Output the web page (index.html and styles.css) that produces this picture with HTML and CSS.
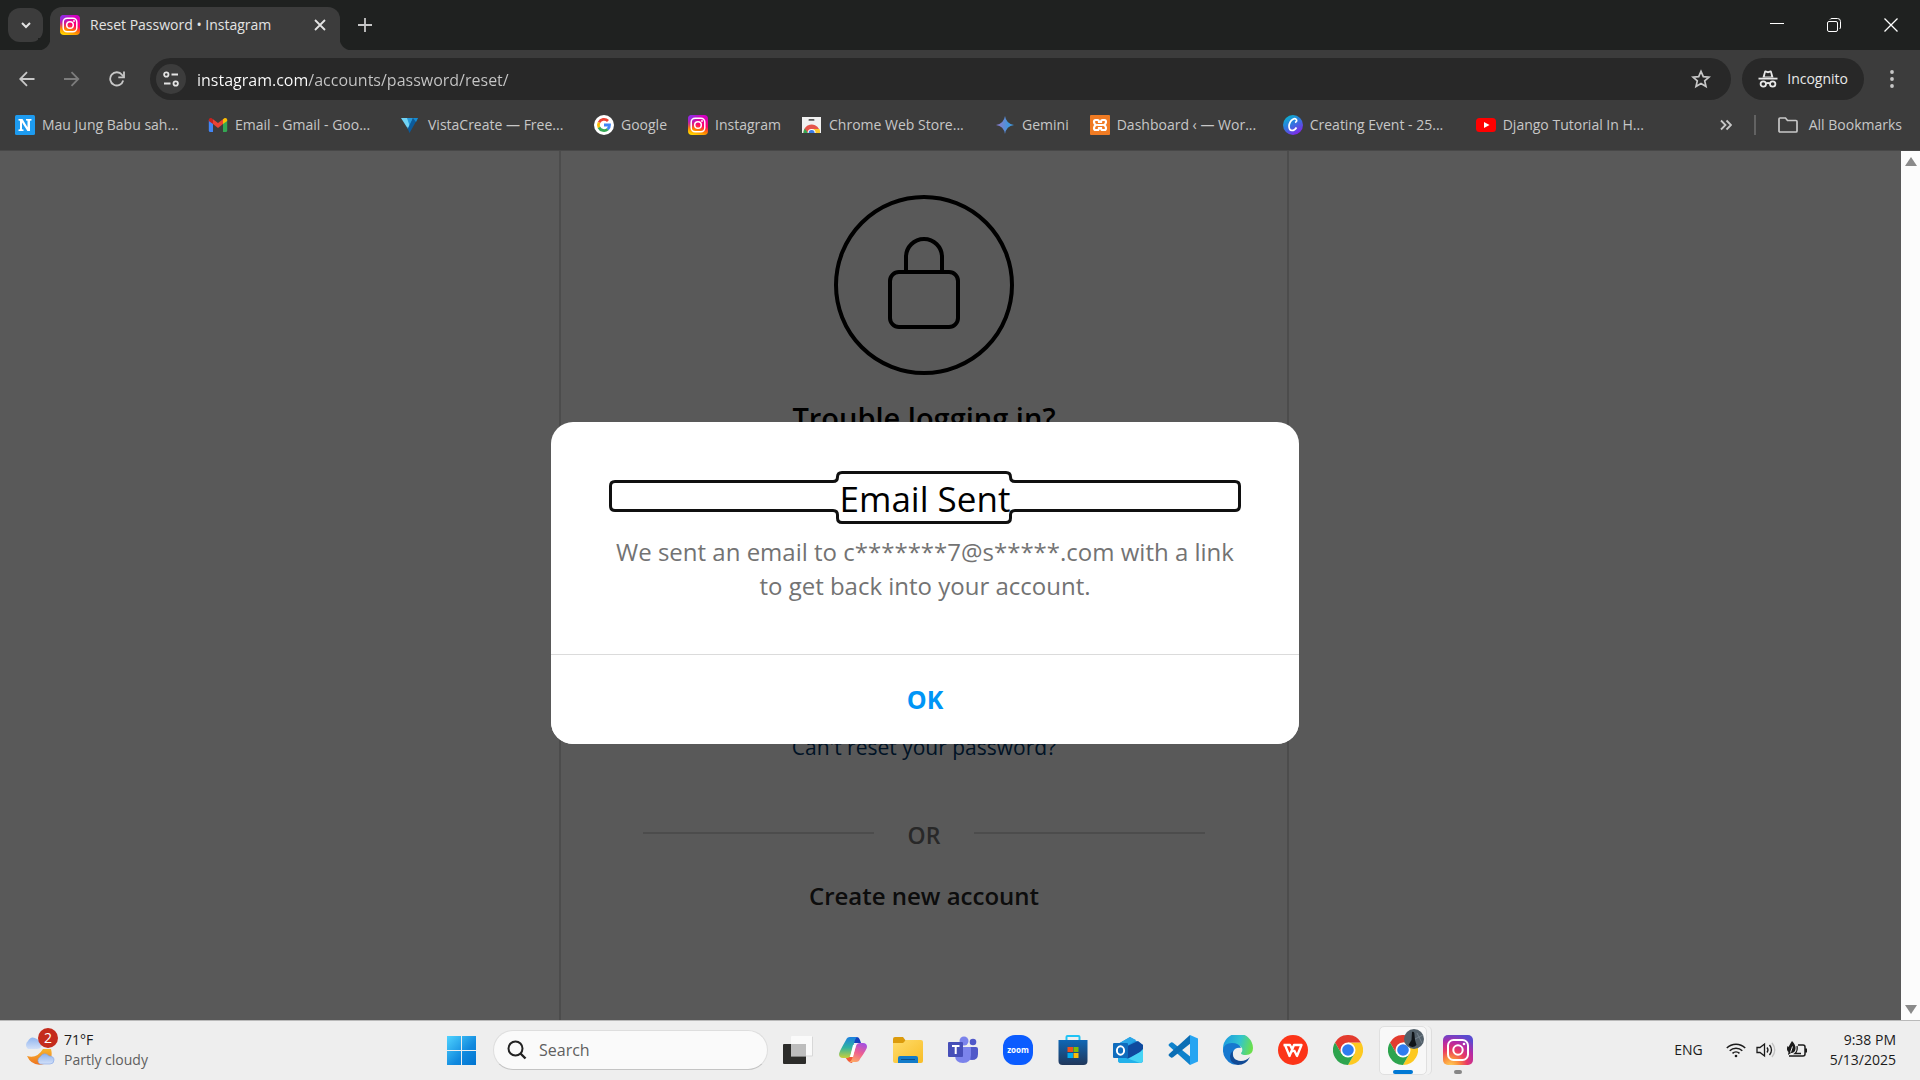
FILE: index.html
```html
<!DOCTYPE html>
<html lang="en">
<head>
<meta charset="utf-8">
<title>Reset Password • Instagram</title>
<link rel="stylesheet" href="styles.css">
</head>
<body>
<svg class="defs" width="0" height="0" aria-hidden="true">
  <defs>
    <linearGradient id="ig-base" x1="0.3" y1="1" x2="0.6" y2="0">
      <stop offset="0" stop-color="#ffd600"/><stop offset=".28" stop-color="#ff7a00"/><stop offset=".55" stop-color="#ff0169"/><stop offset="1" stop-color="#d300c5"/>
    </linearGradient>
    <radialGradient id="ig-corner" cx="0" cy="0" r=".7">
      <stop offset="0" stop-color="#7638fa"/><stop offset="1" stop-color="#7638fa" stop-opacity="0"/>
    </radialGradient>
    <symbol id="instagram" viewBox="0 0 20 20">
      <rect width="20" height="20" rx="4" fill="url(#ig-base)"/>
      <rect width="20" height="20" rx="4" fill="url(#ig-corner)"/>
      <rect x="3.2" y="3.2" width="13.6" height="13.6" rx="4" fill="none" stroke="#fff" stroke-width="1.5"/>
      <circle cx="10" cy="10" r="3.3" fill="none" stroke="#fff" stroke-width="1.5"/>
      <circle cx="14" cy="6" r=".9" fill="#fff"/>
    </symbol>
    <symbol id="chrome" viewBox="0 0 30 30">
      <path d="M28 7.5A15 15 0 0 1 15 30l6.4-11.2L15 7.5Z" fill="#fdc921"/>
      <path d="M2 7.5 8.5 18.8 15 15V7.5H28A15 15 0 0 0 2 7.5Z" fill="#e33b2e"/>
      <path d="M2 7.5A15 15 0 0 0 15 30L21.4 18.8 15 15 8.5 18.8Z" fill="#2da44e"/>
      <circle cx="15" cy="15" r="7.5" fill="#fff"/>
      <circle cx="15" cy="15" r="5.8" fill="#2f7cf0"/>
    </symbol>
  </defs>
</svg>

<header class="browser">
  <div class="tabstrip">
    <button class="tab-search" aria-label="Search tabs"><svg width="12" height="12" viewBox="0 0 12 12"><path d="M2 4l4 4 4-4" fill="none" stroke="#e3e3e3" stroke-width="2"/></svg></button>
    <div class="tab">
      <svg width="20" height="20"><use href="#instagram"/></svg>
      <span class="tab-title">Reset Password • Instagram</span>
      <button class="bare" aria-label="Close tab"><svg width="12" height="12" viewBox="0 0 12 12"><path d="M1 1l10 10M11 1L1 11" stroke="#e3e3e3" stroke-width="1.8"/></svg></button>
    </div>
    <button class="bare new-tab" aria-label="New tab"><svg width="14" height="14" viewBox="0 0 14 14"><path d="M7 0v14M0 7h14" stroke="#c7c7c7" stroke-width="1.800"/></svg></button>
    <div class="window-buttons">
      <button class="bare" aria-label="Minimize"><svg width="14" height="14" viewBox="0 0 14 14"><path d="M0 5.500h14" stroke="#fff"/></svg></button>
      <button class="bare" aria-label="Restore"><svg width="14" height="14" viewBox="0 0 14 14" fill="none" stroke="#fff"><rect x=".5" y="3.500" width="10" height="10" rx="1.500"/><path d="M3 1.500Q3.500.5 5 .5h5.500q3 0 3 3V9q0 1.500-1 2"/></svg></button>
      <button class="bare" aria-label="Close"><svg width="14" height="14" viewBox="0 0 14 14"><path d="M.5.5l13 13M13.500.5l-13 13" stroke="#fff" stroke-width="1.300"/></svg></button>
    </div>
  </div>

  <div class="toolbar">
    <nav class="history">
      <button class="bare" aria-label="Back"><svg width="16" height="16" viewBox="0 0 16 16"><path d="M15.500 8H2M8 1.200L1.200 8 8 14.800" fill="none" stroke="#c7c7c7" stroke-width="1.800"/></svg></button>
      <button class="bare" aria-label="Forward"><svg width="16" height="16" viewBox="0 0 16 16"><path d="M0 8h14M7.500 1.200L14.300 8l-6.800 6.800" fill="none" stroke="#7c7c7c" stroke-width="1.800"/></svg></button>
      <button class="bare" aria-label="Reload"><svg width="16" height="16" viewBox="0 0 16 16"><path d="M14.200 9.500A6.600 6.600 0 1 1 13 3.800L14.500 5.500" fill="none" stroke="#c7c7c7" stroke-width="1.800"/><path d="M15 .5v5.800H9.300" fill="none" stroke="#c7c7c7" stroke-width="1.800"/></svg></button>
    </nav>
    <div class="omnibox">
      <button class="site-info" aria-label="View site information"><svg width="16" height="16" viewBox="0 0 16 16" fill="none" stroke="#e3e3e3" stroke-width="1.800"><circle cx="3.300" cy="3.500" r="2.200"/><path d="M8.500 3.500H15M1 12.500h6.500"/><circle cx="12.700" cy="12.500" r="2.200"/></svg></button>
      <input class="url" type="text" aria-label="Address" value="instagram.com/accounts/password/reset/">
      <button class="bare" aria-label="Bookmark this tab"><svg width="20" height="20" viewBox="0 0 20 20"><path d="M10 2.300l2.300 5.300 5.700.5-4.300 3.800 1.300 5.700L10 14.600l-5 3 1.300-5.700L2 8.100l5.700-.5z" fill="none" stroke="#c7c7c7" stroke-width="1.700"/></svg></button>
    </div>
    <button class="incognito">
      <svg width="20" height="18" viewBox="0 0 20 18"><path d="M4.500 7.500L6.300 1.300Q6.500.5 7.500.6L10 1.200 12.500.6q1-.1 1.200.7l1.800 6.200z" fill="#e8e8e8"/><path d="M7.700 2.600L6.800 6.500h6.400l-.9-3.900L10 3.200z" fill="#282828"/><path d="M.5 8.600h19" stroke="#e8e8e8" stroke-width="1.800"/><g fill="none" stroke="#e8e8e8" stroke-width="1.800"><circle cx="5.300" cy="14" r="2.700"/><circle cx="14.700" cy="14" r="2.700"/><path d="M8 13.500q2-1 4 0"/></g></svg>
      Incognito
    </button>
    <button class="bare menu" aria-label="Menu"><svg width="4" height="18" viewBox="0 0 4 18" fill="#c7c7c7"><circle cx="2" cy="2" r="1.900"/><circle cx="2" cy="9" r="1.900"/><circle cx="2" cy="16" r="1.900"/></svg></button>
  </div>

  <nav class="bookmarks">
    <a class="bookmark clipped" href="#"><svg width="20" height="20" viewBox="0 0 20 20"><rect width="20" height="20" rx="1.500" fill="#1d9bf0"/><path d="M3.500 4h4l5 8.200V5.800L11 5.500V4h5.500v1.500L15 5.800V16h-2.600L7 7.500v6.700l1.500.3V16h-5v-1.500L5 14.200V5.800l-1.500-.3z" fill="#fff"/></svg><span>Mau Jung Babu sah...</span></a>
    <a class="bookmark clipped" href="#"><svg width="20" height="20" viewBox="0 0 20 20"><path d="M.8 5v10.500q0 1.500 1.500 1.500H5V8z" fill="#4285f4"/><path d="M15 8v9h2.700q1.500 0 1.500-1.500V5z" fill="#34a853"/><path d="M5 9V4.200l5 3.900 5-3.900V9l-5 4z" fill="#ea4335"/><path d="M.8 5.500V4.800Q1 2.500 3.300 3L5 4.200V9L.8 6z" fill="#c5221f"/><path d="M19.200 5.500V4.800Q19 2.500 16.700 3L15 4.200V9l4.200-3z" fill="#fbbc04"/></svg><span>Email - Gmail - Goo...</span></a>
    <a class="bookmark clipped" href="#"><svg width="20" height="20" viewBox="0 0 20 20"><path d="M0 3h7l3 8-3 3z" fill="#70d3f5"/><path d="M6 3h6l-3 9z" fill="#2798d8"/><path d="M7 13l5-10h5L8.500 18 6 12z" fill="#0c5b9b"/><path d="M12 3h5l-2 4z" fill="#168bd1"/></svg><span>VistaCreate — Free...</span></a>
    <a class="bookmark" href="#"><svg width="20" height="20" viewBox="0 0 20 20" fill="none" stroke-width="2.800"><circle cx="10" cy="10" r="10" fill="#fff"/><path d="M14 6A5.600 5.600 0 0 0 5 7.500" stroke="#ea4335"/><path d="M5 7.500a5.600 5.600 0 0 0 0 5" stroke="#fbbc05"/><path d="M5 12.500a5.600 5.600 0 0 0 8.700 1.700" stroke="#34a853"/><path d="M10 10h5.500a5.600 5.600 0 0 1-1.800 4.200" stroke="#4285f4"/></svg><span>Google</span></a>
    <a class="bookmark" href="#"><svg width="20" height="20"><use href="#instagram"/></svg><span>Instagram</span></a>
    <a class="bookmark clipped" href="#"><svg width="20" height="20" viewBox="0 0 20 20"><path d="M0 2h19v16H0z" fill="#f1f1f1"/><rect x="6.500" y="4" width="6" height="1.800" rx=".9" fill="#555"/><path d="M1.500 18a8.200 8.200 0 0 1 15.500-4H9.500v4z" fill="#e5544a"/><path d="M1.500 18q0-2.500 1.300-4.500L6 18z" fill="#34a853"/><path d="M10 14h7.500q.8 2 .5 4h-8z" fill="#fbc72d"/><path d="M5.600 18a4 4 0 0 1 8 0z" fill="#fff"/><path d="M6.600 18a3 3 0 0 1 6 0z" fill="#3879e8"/></svg><span>Chrome Web Store...</span></a>
    <a class="bookmark" href="#"><svg width="20" height="20" viewBox="0 0 20 20"><defs><linearGradient id="gem"><stop offset=".2" stop-color="#7d7fd0"/><stop offset=".7" stop-color="#4296dd"/></linearGradient></defs><path d="M10 1q1.200 7.800 9 9-7.800 1.200-9 9-1.200-7.800-9-9 7.800-1.200 9-9z" fill="url(#gem)"/></svg><span>Gemini</span></a>
    <a class="bookmark clipped" href="#"><svg width="20" height="20" viewBox="0 0 20 20"><rect width="20" height="20" rx="1" fill="#f07b23"/><path d="M7.500 5H5.500Q4 5 4 7t2 3q-2 1-2 3t1.500 2h2Q9 15 9 13h2q0 2 1.500 2h2q1.500 0 1.500-2t-2-3q2-1 2-3t-1.500-2h-2Q11 5 11 7H9Q9 5 7.500 5zM7.500 10h5" fill="none" stroke="#fff" stroke-width="2.200"/></svg><span>Dashboard ‹ — Wor...</span></a>
    <a class="bookmark clipped" href="#"><svg width="20" height="20" viewBox="0 0 20 20"><defs><linearGradient id="canva" x1="0" y1="0" x2=".6" y2="1"><stop stop-color="#00c4cc"/><stop offset=".5" stop-color="#2b7ddd"/><stop offset="1" stop-color="#7d2ae8"/></linearGradient></defs><circle cx="10" cy="10" r="10" fill="url(#canva)"/><path d="M12 7.500q2.200-.8 1.500-2.700Q12.500 3 10 4.200 6.500 6.300 6 11q0 4.300 3 4.500 2.700 0 4.500-3" fill="none" stroke="#fff" stroke-width="1.700"/></svg><span>Creating Event - 25...</span></a>
    <a class="bookmark clipped" href="#"><svg width="20" height="20" viewBox="0 0 20 20"><rect y="3" width="20" height="14" rx="3.500" fill="#f00"/><path d="M8 7l5.500 3L8 13z" fill="#fff"/></svg><span>Django Tutorial In H...</span></a>
    <div class="bookmarks-end">
      <button class="bare" aria-label="More bookmarks"><svg width="12" height="12" viewBox="0 0 12 12"><path d="M1 1.500L5.500 6 1 10.500M6.500 1.500L11 6l-4.500 4.500" fill="none" stroke="#c7c7c7" stroke-width="1.800"/></svg></button>
      <span class="rule"></span>
      <a class="bookmark all" href="#"><svg width="20" height="20" viewBox="0 0 20 20"><path d="M1 4q0-1 1-1h5.500l2 2.500H18q1 0 1 1V16q0 1-1 1H2q-1 0-1-1z" fill="none" stroke="#c7c7c7" stroke-width="1.700"/></svg><span>All Bookmarks</span></a>
    </div>
  </nav>
</header>

<main class="viewport">
  <div class="page">
    <section class="card">
      <svg class="lock" width="180" height="180" viewBox="0 0 180 180" fill="none" stroke="#000" stroke-width="4"><circle cx="90" cy="90" r="88"/><rect x="56" y="77" width="68" height="55" rx="9"/><path d="M72 77V62a18 18 0 0 1 36 0v15"/></svg>
      <h1 class="heading">Trouble logging in?</h1>
      <a class="help" href="#">Can't reset your password?</a>
      <div class="or"><span>OR</span></div>
      <a class="create" href="#">Create new account</a>
    </section>
    <div class="overlay">
      <div class="dialog" role="dialog" aria-labelledby="sent">
        <div class="message">
          <div class="title">
            <svg width="632" height="54" viewBox="0 0 632 54"><path d="M6 10.500H224Q228.500 10.500 228.500 6T233 1.500H397Q401.500 1.500 401.500 6T406 10.500H626Q630.500 10.500 630.500 15V35Q630.500 39.500 626 39.500H406Q401.500 39.500 401.500 44V47Q401.500 51.500 397 51.500H233Q228.500 51.500 228.500 47V44Q228.500 39.500 224 39.500H6Q1.500 39.500 1.500 35V15Q1.500 10.500 6 10.500Z" fill="none" stroke="#101010" stroke-width="3"/></svg>
            <h2 id="sent">Email Sent</h2>
          </div>
          <p>We sent an email to c*******7@s*****.com with a link<br>to get back into your account.</p>
        </div>
        <button class="ok">OK</button>
      </div>
    </div>
  </div>
  <div class="scrollbar"><span class="arrow up"></span><span class="arrow down"></span></div>
</main>

<footer class="taskbar">
  <div class="weather">
    <svg width="32" height="36" viewBox="0 0 32 36"><defs><linearGradient id="cloud" x1="0" y1="0" x2="0" y2="1"><stop stop-color="#8fb4ee"/><stop offset="1" stop-color="#d3e0f8"/></linearGradient><linearGradient id="moon" x1="0" y1="0" x2="0" y2="1"><stop stop-color="#f7b52e"/><stop offset="1" stop-color="#ee7420"/></linearGradient></defs><path d="M3 24q10 3 16-7h8q3 12-7 15Q8 35 3 24z" fill="url(#moon)"/><path d="M4 17a5 5 0 0 1 0-8q3-6 9-2 6 4 4 8-1 2-4 2z" fill="url(#cloud)"/><path d="M16 32a4 4 0 0 1 0-7q4-6 9-1 5 0 5 4 0 4-4 4z" fill="url(#cloud)" stroke="#7fa2e6" stroke-width=".6"/></svg>
    <span class="badge">2</span>
    <div class="forecast"><span>71°F</span><span class="dim">Partly cloudy</span></div>
  </div>

  <div class="apps">
    <button class="bare" aria-label="Start"><svg width="30" height="30" viewBox="0 0 30 30"><defs><linearGradient id="win" x1="0" y1="0" x2="1" y2="1"><stop stop-color="#4fd3ff"/><stop offset=".6" stop-color="#1189de"/><stop offset="1" stop-color="#0074d0"/></linearGradient></defs><path d="M0 1h14v14H0zM15 1h14v14H15zM0 16h14v14H0zM15 16h14v14H15z" fill="url(#win)"/></svg></button>
    <label class="search"><svg width="20" height="20" viewBox="0 0 20 20"><circle cx="8.500" cy="8.500" r="7" fill="none" stroke="#222" stroke-width="2"/><path d="M13.500 13.500l5 5" stroke="#222" stroke-width="2.400"/></svg><input type="text" placeholder="Search" aria-label="Search"></label>
    <div class="icons">
      <button class="bare" aria-label="Task view"><svg width="30" height="30" viewBox="0 0 30 30"><rect y="9" width="23" height="20" rx="1" fill="#2c2c2a"/><rect x="8" y="1" width="22" height="20" rx="1" fill="#fafafa"/><path d="M8 21h21.500V1.500" fill="none" stroke="#d8d8d8"/><rect x="8" y="9" width="15" height="12" fill="#bdbdbd"/></svg></button>
      <button class="bare" aria-label="Copilot"><svg width="30" height="30" viewBox="0 0 30 30"><defs><linearGradient id="cop1" x1="0" y1="0" x2="0" y2="1"><stop stop-color="#1b7fe0"/><stop offset=".5" stop-color="#30b3a0"/><stop offset="1" stop-color="#c9d03a"/></linearGradient><linearGradient id="cop2" x1="0.700" y1="0" x2=".3" y2="1"><stop stop-color="#a54fe0"/><stop offset=".5" stop-color="#ee5f90"/><stop offset="1" stop-color="#fda765"/></linearGradient></defs><path d="M16 2h3q2 0 3 3l1 3h-7z" fill="#1740bd"/><path d="M7 22l3 4q2 2 4 2l3-6z" fill="#f25a37"/><path d="M8 5q1-3 4-3h8q-2 0-3 3l-4 14q-1 4-4 4H5q-4 0-4-4 0-2 7-14z" fill="url(#cop1)"/><path d="M22 24q-1 3-4 3h-7q2 0 3-3l4-13q1-3 4-3h3q4 0 4 4 0 2-7 12z" fill="url(#cop2)"/><path d="M15 10h3l-3 12h-3z" fill="#fff"/></svg></button>
      <button class="bare" aria-label="File Explorer"><svg width="30" height="30" viewBox="0 0 30 30"><path d="M0 4q0-2 2-2h8l3 4v6H0z" fill="#dc9b0c"/><defs><linearGradient id="fold" x1="0" y1="0" x2="1" y2="1"><stop stop-color="#ffdc6b"/><stop offset="1" stop-color="#f8bd26"/></linearGradient></defs><path d="M0 8h10l3-3h15q2 0 2 2v19q0 2-2 2H2q-2 0-2-2z" fill="url(#fold)"/><path d="M5 28v-5q0-2 2-2h16q2 0 2 2v5z" fill="#127bc9"/><path d="M8 24.500h14" stroke="#0c4f88"/></svg></button>
      <button class="bare" aria-label="Teams"><svg width="30" height="30" viewBox="0 0 30 30"><circle cx="25" cy="7" r="3.300" fill="#5059c9"/><circle cx="16" cy="6" r="4.500" fill="#7b83eb"/><path d="M19 12h9q2 0 2 2v5q0 6-6 6-5 0-5-6z" fill="#5059c9"/><path d="M8 12h14q1 0 1 1v7q0 8-8 8t-8-8z" fill="#7b83eb"/><rect y="7" width="15" height="15" rx="1" fill="#464eb8"/><path d="M4 11h7.500M7.700 11v8" stroke="#fff" stroke-width="2"/></svg></button>
      <button class="bare zoom-app" aria-label="Zoom">zoom</button>
      <button class="bare" aria-label="Store"><svg width="30" height="30" viewBox="0 0 30 30"><defs><linearGradient id="store" x1="0" y1="0" x2="0" y2="1"><stop stop-color="#0f67b5"/><stop offset="1" stop-color="#20375b"/></linearGradient></defs><path d="M8.500 6V2q0-1 1-1h11q1 0 1 1v4" fill="none" stroke="#20c3f5" stroke-width="2"/><path d="M.500 5h29v21q0 4-4 4h-21q-4 0-4-4z" fill="url(#store)"/><path d="M9.500 12H15v5H9.500z" fill="#f1511b"/><path d="M15.500 12H20.500v5H15.500z" fill="#80bc06"/><path d="M9.500 18H15v5H9.500z" fill="#00adef"/><path d="M15.500 18H20.500v5H15.500z" fill="#fbbc09"/></svg></button>
      <button class="bare" aria-label="Outlook"><svg width="30" height="30" viewBox="0 0 30 30"><path d="M5 9L17 2l13 8v15q0 3-3 3H8q-3 0-3-3z" fill="#1c95dc"/><path d="M10 13L25 6l5 4v6L12 25z" fill="#0f4a9e"/><path d="M30 14v11q0 3-3 3H8L27 17z" fill="#46d4f5"/><path d="M5 20l22 8H8q-3 0-3-3z" fill="#22b1ea"/><path d="M5 9L17 2l6 3L9 14z" fill="#29a6e8"/><rect y="8" width="15" height="15" rx="1" fill="#0f6cbd"/><ellipse cx="7.500" cy="15.500" rx="3.600" ry="4.200" fill="none" stroke="#fff" stroke-width="2"/></svg></button>
      <button class="bare" aria-label="Visual Studio Code"><svg width="30" height="30" viewBox="0 0 30 30"><path d="M22 30L1 11q-1-1 0-2l2-1.500q1-.5 2 .2L24 23z" fill="#0f82cc"/><path d="M22 0L1 19q-1 1 0 2l2 1.500q1 .5 2-.2L23 8z" fill="#0b6eb5"/><path d="M22 0l8 3.500v23L22 30V8z" fill="#27a5f2"/></svg></button>
      <button class="bare" aria-label="Edge"><svg width="30" height="30" viewBox="0 0 30 30"><defs><linearGradient id="edge1" x1="0" y1=".3" x2="1" y2=".5"><stop stop-color="#1b9ae0"/><stop offset=".55" stop-color="#32c4cf"/><stop offset="1" stop-color="#6be04a"/></linearGradient></defs><path d="M0 14A15 15 0 0 1 30 13q0 7-7 7-5 0-5-2 2-2 1-5-4-5-10-3-5 1-9 8z" fill="url(#edge1)"/><path d="M0 15q1-7 9-7 7 0 9 5-6-1-8 4-1 7 6 12-3 1-7 0A15 15 0 0 1 0 15z" fill="#1678cf"/><path d="M10 16q-2 9 8 10 5 0 9-4-4 8-12 8-8-1-8-9 0-3 3-5z" fill="#114a95"/></svg></button>
      <button class="bare" aria-label="WPS Office"><svg width="30" height="30" viewBox="0 0 30 30"><circle cx="15" cy="15" r="15" fill="#fc3418"/><path d="M5.500 10H12l3.500 7M7 10l4.500 11L16 10h7.500L19 21l-3-6" fill="none" stroke="#fff" stroke-width="2.300" stroke-linejoin="round"/></svg></button>
      <button class="bare" aria-label="Google Chrome"><svg width="30" height="30"><use href="#chrome"/></svg></button>
      <button class="bare active" aria-label="Google Chrome, incognito"><svg width="30" height="30"><use href="#chrome"/></svg><svg class="avatar" width="20" height="20" viewBox="0 0 20 20"><circle cx="10" cy="10" r="10" fill="#53606a"/><path d="M8 3q2.500-1 2.500 3l.5 5 1.500 5q-4 4-8 0l3-5z" fill="#101418"/><path d="M11 10l8-4M13 4l5 10" stroke="#7b8994" stroke-width=".8"/></svg></button>
      <button class="bare running" aria-label="Instagram"><svg width="30" height="30" viewBox="0 0 30 30"><defs><radialGradient id="ig2" cx=".25" cy="1.050" r="1.100"><stop stop-color="#ffd35c"/><stop offset=".25" stop-color="#fb923c"/><stop offset=".5" stop-color="#ea3a63"/><stop offset=".75" stop-color="#b62aa5"/><stop offset="1" stop-color="#5b4bd0"/></radialGradient></defs><rect width="30" height="30" rx="5" fill="url(#ig2)"/><g fill="none" stroke="#fff" stroke-width="2"><rect x="5" y="5" width="20" height="20" rx="5.500"/><circle cx="15" cy="15" r="4.700"/></g><circle cx="21" cy="9" r="1.300" fill="#fff"/></svg></button>
    </div>
  </div>

  <div class="tray">
    <span class="lang">ENG</span>
    <svg width="20" height="20" viewBox="0 0 20 20" fill="none" stroke="#1b1b1b" stroke-width="1.500"><path d="M.800 8a13 13 0 0 1 18.400 0M3.700 10.800a9 9 0 0 1 12.600 0M6.500 13.400a5 5 0 0 1 7 0"/><circle cx="10" cy="16" r="1.300" fill="#1b1b1b" stroke="none"/></svg>
    <svg width="20" height="20" viewBox="0 0 20 20" fill="none" stroke="#1b1b1b" stroke-width="1.300"><path d="M1 7.500h3L8.500 4v12L4 12.500H1z"/><path d="M11 7.500q2 2.500 0 5M13.500 5q4 5 0 10"/><path d="M16 3q5.500 7 0 14" stroke="#c2c2c2"/></svg>
    <svg width="22" height="20" viewBox="0 0 22 20"><path d="M12 5h5q2 0 2 2v7q0 2-2 2H3" fill="none" stroke="#1b1b1b" stroke-width="1.500"/><path d="M19 8.500h2v4h-2z" fill="#1b1b1b"/><path d="M6 1q4 4 3.500 8-.5 4-4.500 4l-3 2 .5-3Q0 10 1.500 6l1 1Q4 4 6 1z" fill="#1b1b1b"/><path d="M11 6q1 5-2 7.500h6" fill="none" stroke="#1b1b1b" stroke-width="1.300"/><path d="M4.500 12.500l2-6" stroke="#eee"/></svg>
    <div class="clock"><span>9:38 PM</span><span>5/13/2025</span></div>
  </div>
</footer>
</body>
</html>
```
FILE: styles.css
```css
* { box-sizing: border-box; }
body {
  margin: 0;
  height: 100vh;
  display: flex;
  flex-direction: column;
  overflow: hidden;
  font-family: "Open Sans", "Noto Sans", sans-serif;
  font-size: 14px;
  line-height: 20px;
}
svg { display: block; flex: none; }
a { color: inherit; text-decoration: none; }
button, input { font: inherit; color: inherit; }
h1, h2, p { margin: 0; }
.defs { position: absolute; }
.bare {
  display: grid;
  place-items: center;
  padding: 0;
  border: 0;
  background: none;
}

/* browser frame */
.browser { background: #3c3c3c; color: #c7c7c7; border-bottom: 1px solid #484848; }
.tabstrip {
  display: flex;
  align-items: center;
  height: 50px;
  padding-left: 8px;
  background: #1f2120;
}
.tab-search {
  display: grid;
  place-items: center;
  width: 35px;
  height: 34px;
  padding: 0;
  border: 0;
  border-radius: 12px;
  background: #3c3c3c;
}
.tab {
  position: relative;
  display: flex;
  align-items: center;
  align-self: flex-end;
  gap: 10px;
  width: 290px;
  height: 43px;
  margin-left: 7px;
  padding: 0 14px 7px 10px;
  border-radius: 12px 12px 0 0;
  background: #3c3c3c;
  color: #e3e3e3;
}
.tab::before, .tab::after {
  content: "";
  position: absolute;
  bottom: 0;
  width: 12px;
  height: 12px;
}
.tab::before { right: 100%; background: radial-gradient(circle at 0 0, #1f2120 12px, #3c3c3c 13px); }
.tab::after { left: 100%; background: radial-gradient(circle at 100% 0, #1f2120 12px, #3c3c3c 13px); }
.tab-title { flex: 1; white-space: nowrap; }
.new-tab { margin-left: 18px; }
.window-buttons { display: flex; gap: 43px; margin-left: auto; padding-right: 22px; }

.toolbar { display: flex; align-items: center; height: 57px; padding: 0 26px 0 0; }
.history { display: flex; gap: 29px; width: 150px; padding-left: 19px; }
.omnibox {
  flex: 1;
  display: flex;
  align-items: center;
  gap: 11px;
  height: 42px;
  padding: 0 20px 0 6px;
  border-radius: 21px;
  background: #282828;
}
.site-info {
  display: grid;
  place-items: center;
  width: 30px;
  height: 30px;
  padding: 0;
  border: 0;
  border-radius: 50%;
  background: #3c3c3c;
}
.url {
  flex: 1;
  min-width: 0;
  padding: 2px 0 0;
  border: 0;
  outline: 0;
  font-size: 16px;
  line-height: 24px;
  color: transparent;
  background: linear-gradient(90deg, #fff 111px, #c7c7c7 111px);
  -webkit-background-clip: text;
  background-clip: text;
}
.incognito {
  display: flex;
  align-items: center;
  gap: 9px;
  height: 42px;
  margin-left: 11px;
  padding: 0 16px;
  border: 0;
  border-radius: 21px;
  background: #282828;
  color: #e8e8e8;
}
.menu { margin-left: 26px; }

.bookmarks {
  display: flex;
  align-items: center;
  gap: 21px;
  height: 43px;
  padding: 0 18px 7px 15px;
}
.bookmark { display: flex; align-items: center; gap: 7px; white-space: nowrap; }
.clipped { width: 172px; }
.bookmarks-end { display: flex; align-items: center; gap: 22px; margin-left: auto; }
.all { gap: 11px; }
.rule { width: 2px; height: 20px; background: #626262; }

/* web page */
.viewport { flex: 1; min-height: 0; display: flex; }
.page {
  position: relative;
  flex: 1;
  display: flex;
  justify-content: center;
  padding-right: 53px;
  background: #fff;
  overflow: hidden;
}
.card {
  display: flex;
  flex-direction: column;
  align-items: center;
  width: 730px;
  padding: 44px 82px 0;
  border: solid #dbdbdb;
  border-width: 0 2px;
  color: #000;
}
.heading { margin: 25px 0 297px; font-size: 29px; line-height: 36px; font-weight: 600; }
.help { font-size: 21px; line-height: 28px; color: #00376b; }
.or {
  display: flex;
  align-items: center;
  align-self: stretch;
  gap: 34px;
  margin: 55px 0 30px;
  color: #737373;
  font-size: 23px;
  line-height: 30px;
  font-weight: 600;
}
.or span { padding-top: 4px; }
.or::before, .or::after { content: ""; flex: 1; height: 2px; background: #dbdbdb; }
.create { font-size: 24px; line-height: 32px; font-weight: 600; color: #262626; }

.overlay {
  position: absolute;
  inset: 0;
  display: grid;
  place-items: center;
  padding: 0 51px 6px 0;
  background: rgba(0, 0, 0, .65);
}
.dialog { width: 748px; border-radius: 22px; background: #fff; overflow: hidden; text-align: center; }
.message { padding: 49px 20px 51px; }
.title { display: grid; place-items: center; margin-bottom: 10px; }
.title > * { grid-area: 1 / 1; }
.title h2 { padding-top: 2px; font-size: 35px; line-height: 52px; font-weight: 400; }
.message p { font-size: 24px; line-height: 34px; color: #737373; }
.ok {
  display: block;
  width: 100%;
  height: 90px;
  padding: 0;
  border: 0;
  border-top: 1px solid #dbdbdb;
  background: #fff;
  color: #0095f6;
  font-size: 25px;
  font-weight: 700;
}
.scrollbar {
  display: flex;
  flex-direction: column;
  justify-content: space-between;
  align-items: center;
  width: 19px;
  padding: 6px 0;
  background: #fcfcfc;
}
.arrow { border: solid transparent; border-width: 0 6px; }
.up { border-bottom: 9px solid #8a8a8a; }
.down { border-top: 9px solid #8a8a8a; }

/* taskbar */
.taskbar {
  display: grid;
  grid-template-columns: 1fr auto 1fr;
  align-items: center;
  height: 60px;
  padding-bottom: 2px;
  border-top: 1px solid #b9b9b9;
  background: #eee;
  color: #1b1b1b;
}
.weather { position: relative; display: flex; align-items: center; gap: 8px; padding-left: 24px; }
.badge {
  position: absolute;
  left: 38px;
  top: -2px;
  width: 20px;
  border-radius: 10px;
  background: #c42b1c;
  color: #fff;
  text-align: center;
}
.forecast, .clock { display: flex; flex-direction: column; }
.dim { color: #5f5f5f; }
.apps { display: flex; align-items: center; }
.search {
  display: flex;
  align-items: center;
  gap: 12px;
  width: 275px;
  height: 40px;
  margin: 0 15px 0 16px;
  padding-left: 13px;
  border: 1px solid #dedede;
  border-bottom-color: #c4c4c4;
  border-radius: 20px;
  background: #fafafa;
}
.search input { width: 200px; padding: 0; border: 0; outline: 0; background: none; font-size: 16px; }
.search input::placeholder { color: #5f5f5f; opacity: 1; }
.icons { display: flex; gap: 25px; }
.icons .bare { position: relative; width: 30px; height: 30px; }
.icons .zoom-app {
  border-radius: 12px;
  background: #0b5cff;
  color: #fff;
  font-size: 8px;
  font-weight: 700;
}
.active::before {
  content: "";
  position: absolute;
  inset: -9px -9px -10px -9px;
  z-index: 0;
  border: 1px solid #e0e0e0;
  border-radius: 5px;
  background: #f8f8f8;
  box-shadow: 4px 0 0 #f3f3f3, 5px 0 0 #dedede;
}
.active svg { position: relative; }
.active .avatar { position: absolute; left: 16px; top: -6px; }
.active::after, .running::after {
  content: "";
  position: absolute;
  bottom: -9px;
  left: 50%;
  width: 20px;
  height: 4px;
  margin-left: -10px;
  border-radius: 2px;
  background: #0078d4;
}
.running::after { width: 8px; margin-left: -4px; background: #868686; }
.tray { display: flex; align-items: center; justify-content: flex-end; gap: 10px; padding-right: 24px; }
.lang { margin-right: 13px; }
.clock { margin-left: 12px; text-align: right; }
```
